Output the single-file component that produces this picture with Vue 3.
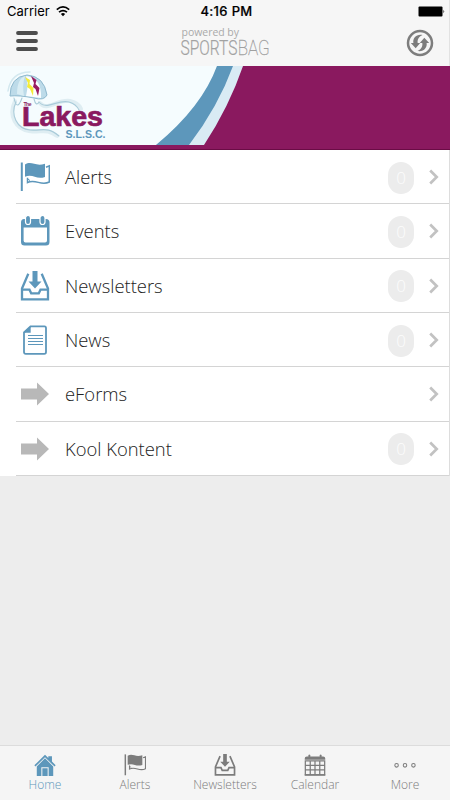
<script setup>
const rows = [
  { label: 'Alerts', icon: 'flag', count: 0 },
  { label: 'Events', icon: 'event', count: 0 },
  { label: 'Newsletters', icon: 'inbox', count: 0 },
  { label: 'News', icon: 'page', count: 0 },
  { label: 'eForms', icon: 'arrow' },
  { label: 'Kool Kontent', icon: 'arrow', count: 0 },
]
const tabs = [
  { label: 'Home', icon: 'home', active: true },
  { label: 'Alerts', icon: 'flag' },
  { label: 'Newsletters', icon: 'inbox' },
  { label: 'Calendar', icon: 'calendar' },
  { label: 'More', icon: 'more' },
]
</script>

<template>
  <svg class="defs" width="0" height="0">
    <symbol id="flag" viewBox="0 0 30 30">
      <path d="M0.8 0.500h2v28.500h-2z" fill="currentColor" />
      <path d="M5 2.400C12-1.500 15 5 25 1.800V15C16 18 13 11.500 5 14.800z" fill="currentColor" />
      <path d="M26 5.200L29.300 3.800V20C21 24.500 16 16.500 7.500 20.500V15.700" fill="none" stroke="currentColor" stroke-width="1.500" />
      <path d="M7 16.300L10 18.600" stroke="currentColor" stroke-width="1" />
    </symbol>
    <symbol id="event" viewBox="0 0 30 30">
      <path fill-rule="evenodd" d="M4 3H26Q29.500 3 29.500 6.500V26Q29.500 29.500 26 29.500H4.500Q1 29.500 1 26V6.500Q1 3 4 3zM3.600 11.500V24.500Q3.600 26.500 5.500 26.500H25Q27 26.500 27 24.500V11.500z" fill="currentColor" />
      <g fill="currentColor" stroke="#fff" stroke-width="1.200"><rect x="5.500" y="-.500" width="5" height="9" rx="2.500" /><rect x="20" y="-.500" width="5" height="9" rx="2.500" /></g>
    </symbol>
    <symbol id="inbox" viewBox="0 0 30 30">
      <path d="M8.300 2.800L2 17.500V28.400H28V17.500L21.700 2.800" fill="none" stroke="currentColor" stroke-width="2.300" />
      <path d="M2 18.700H9.500L11.200 22.300H18.800L20.500 18.700H28" fill="none" stroke="currentColor" stroke-width="2.300" />
      <path d="M12.500 0h5v10.500h4L15 17.500 8.500 10.500h4z" fill="currentColor" />
    </symbol>
    <symbol id="page" viewBox="0 0 30 30">
      <path d="M10.500 1.300H24.500Q26 1.300 26 3V27Q26 28.800 24.300 28.800H5.700Q4 28.800 4 27V7.500z" fill="none" stroke="currentColor" stroke-width="1.800" />
      <path d="M4 7.800L10.700 1V7.800z" fill="currentColor" />
      <path d="M8 10.500H23M8 13.500H23M8 16.500H23M8 19.500H23" stroke="currentColor" stroke-width="1" />
    </symbol>
    <symbol id="arrow" viewBox="0 0 30 30">
      <path d="M1 9.500H17V3.500L29 15 17 26.500V20.500H1z" fill="#b8b8b8" />
    </symbol>
    <symbol id="home" viewBox="0 0 30 30">
      <path d="M.500 15.500L15 1 19.500 5.300V3H24.500V10.200L29.500 15.500 28 17.200 15 4.400 2 17.200z" fill="currentColor" />
      <path fill-rule="evenodd" d="M3.800 17L15 5.800 26.200 17V30H3.800zM10 18V30H11.400V19.400H18.600V30H20V18z" fill="currentColor" />
    </symbol>
    <symbol id="calendar" viewBox="0 0 30 30">
      <path d="M1 6Q1 3.500 4 3.500H6V1.500Q7.300 0 8.600 1.500V3.500H21.400V1.500Q22.700 0 24 1.500V3.500H26Q29 3.500 29 6V8H1z" fill="currentColor" />
      <path d="M1.800 9.500H28.200V28.300H1.800zM1.800 15.500H28.200M1.800 21.500H28.200M8.500 9.500V28M15 9.500V28M21.500 9.500V28" fill="none" stroke="currentColor" stroke-width="1.700" />
      <path d="M1 28.500H29" stroke="currentColor" stroke-width="2" />
    </symbol>
    <symbol id="more" viewBox="0 0 30 30">
      <g fill="none" stroke="currentColor" stroke-width="1.400"><circle cx="3.500" cy="15.500" r="2.400" /><circle cx="15" cy="15.500" r="2.400" /><circle cx="26.500" cy="15.500" r="2.400" /></g>
    </symbol>
  </svg>

  <div class="screen">
    <header class="top">
      <div class="status">
        <div class="carrier">
          <span>Carrier</span>
          <svg width="14" height="11" viewBox="0 0 14 11">
            <path d="M.800 3.600Q7-1.800 13.200 3.600M3 6.200Q7 2.900 11 6.200" fill="none" stroke="#000" stroke-width="1.700" />
            <path d="M4.900 8Q7 6.200 9.100 8L7 10.200z" />
          </svg>
        </div>
        <span class="time">4:16 PM</span>
        <svg class="battery" width="27" height="11" viewBox="0 0 27 11">
          <rect x=".500" y=".500" width="24" height="10" rx="1" /><path d="M25.500 3.700Q27 5.500 25.500 7.300z" />
        </svg>
      </div>
      <div class="nav">
        <svg class="menu" width="22" height="21" viewBox="0 0 22 21"><path d="M2 2H20M2 10H20M2 18H20" stroke="#4d4d4d" stroke-width="3.800" stroke-linecap="round" /></svg>
        <svg class="brand" width="92" height="36" viewBox="0 0 92 36">
          <text x="2.500" y="12.500" class="powered" textLength="57.500">powered by</text>
          <text x="1.500" y="31.500" class="sports" textLength="57" lengthAdjust="spacingAndGlyphs">SPORTS</text>
          <text x="58.800" y="31.500" class="bag" textLength="32" lengthAdjust="spacingAndGlyphs">BAG</text>
        </svg>
        <svg class="refresh" width="28" height="28" viewBox="0 0 28 28">
          <circle cx="14" cy="14" r="12" fill="none" stroke="#7d7d7d" stroke-width="2.500" />
          <g id="half" fill="#7d7d7d"><path d="M16.500 6C10 5 6.600 9.500 7.400 14H4.800L9.700 19.300 14.200 14H11.700C11.200 10.800 12.500 7.700 16.500 6z" /></g>
          <use href="#half" transform="rotate(180 14 14)" />
        </svg>
      </div>
    </header>

    <svg class="banner" width="450" height="84" viewBox="0 66 450 84">
      <rect y="66" width="450" height="84" fill="#f5fcfe" />
      <path d="M217 66Q202 107 156 145H205Q229 107 243 66z" fill="#d9ebf4" />
      <path d="M217 66Q202 107 156 145H189Q218 107 233 66z" fill="#5d97bb" />
      <path d="M243 66H450V150H0V145H204Q229 107 243 66z" fill="#8a195f" />
      <path d="M0 149.500H450" stroke="#6a0c45" />
      <g fill="none" stroke-linecap="round">
        <path d="M15 101C8 116 16 129 29 131S46 128 57 136M40 103C47 112 57 99 70 101Q79 103 81 109" stroke="#deedf2" stroke-width="4" />
        <path d="M16 102C10 115 17 129 30 130S47 126 59 136M14 98Q17 112 22 98M34 99Q36 107 39 102C47 111 57 99 69 102Q76 104 79 110" stroke="#a9cbd9" stroke-width="1.100" />
        <path d="M8 91Q11 72 30 72" stroke="#d3e8ef" stroke-width="1.500" />
      </g>
      <path d="M10 96Q10 77 27 75Q44 76 47 95Q44 101 34 98Q19 95 10 96z" fill="#bddbe9" stroke="#8fb9ce" />
      <path d="M17 94Q17 79 25 76Q22 85 24 96z" fill="#d9edf4" />
      <path d="M26 76Q42 78 41 98L26 96Q29 84 26 76z" fill="#fbfeff" />
      <path d="M25 77L30 80 29.500 84 33.500 88 33 96 30 89 27 87 28 83z" fill="#f4ec38" />
      <path d="M31 76L36.500 80 35.500 84 39.500 88 38 96 35.500 89 33 87 34 83z" fill="#981c62" />
      <text x="23.500" y="106" class="the" textLength="8">The</text>
      <text x="22" y="126" class="lakes" textLength="81" lengthAdjust="spacingAndGlyphs">Lakes</text>
      <text x="65.500" y="137.500" class="slsc" textLength="40" lengthAdjust="spacingAndGlyphs">S.L.S.C.</text>
    </svg>

    <main class="list">
      <div v-for="row in rows" :key="row.label" class="row">
        <svg class="icon"><use :href="'#' + row.icon" /></svg>
        <span class="label">{{ row.label }}</span>
        <span v-if="row.count !== undefined" class="badge">{{ row.count }}</span>
        <svg class="chevron" width="10" height="16" viewBox="0 0 10 16"><path d="M1.200 1.500L7.700 8 1.200 14.500" fill="none" stroke="#c2c2c2" stroke-width="2.700" /></svg>
      </div>
    </main>

    <footer class="tabs">
      <div v-for="tab in tabs" :key="tab.label" class="tab" :class="{ active: tab.active }">
        <svg class="tab-icon"><use :href="'#' + tab.icon" /></svg>
        <span>{{ tab.label }}</span>
      </div>
    </footer>
  </div>
</template>

<style>
body { margin: 0; }
</style>

<style scoped>
.defs { position: absolute; }
.screen { box-sizing: border-box; width: 450px; height: 800px; display: flex; flex-direction: column; background: #ededed; font-family: "Open Sans", sans-serif; overflow: hidden; }
.top { box-sizing: border-box; height: 66px; background: #f6f6f6; flex: none; border-right: 1px solid #e2e2e2; }
.status { height: 23px; display: grid; grid-template-columns: 1fr auto 1fr; align-items: center; padding: 0 4px 0 7px; font: 13px/23px Inter, sans-serif; color: #000; }
.carrier { display: flex; align-items: center; gap: 6px; }
.time { font-weight: 500; letter-spacing: .35px; padding-left: 1px; -webkit-text-stroke: .2px #000; }
.battery { justify-self: end; }
.nav { height: 39px; display: grid; grid-template-columns: 1fr auto 1fr; align-items: center; padding: 0 15px 0 16px; }
.menu { margin-top: -3px; }
.refresh { justify-self: end; }
.brand { display: block; margin-top: -4px; overflow: visible; }
.powered { font-size: 10.500px; fill: #aaa; }
.sports { font: 300 21px Roboto, sans-serif; fill: #a2a2a2; stroke: #a2a2a2; stroke-width: .2px; }
.bag { font: 100 21px Roboto, sans-serif; fill: #a0a0a0; stroke: #a0a0a0; stroke-width: .3px; }
.banner { display: block; flex: none; }
.the { font: bold 5px "Liberation Sans", sans-serif; fill: #8a195f; }
.lakes { font: bold 27px "Liberation Sans", sans-serif; fill: #8a195f; stroke: #8a195f; stroke-width: .7px; }
.slsc { font: bold 11px "Liberation Sans", sans-serif; fill: #5d97bb; }
.list { background: #fff; height: 326px; display: grid; grid-template-rows: repeat(6, 1fr); border-right: 1px solid #ddd; padding-left: 16px; flex: none; }
.row { display: flex; align-items: center; padding: 1px 10px 0 4px; border-bottom: 1px solid #d4d4d4; }
.icon { width: 30px; height: 30px; color: #5d97bb; flex: none; }
.label { margin: -1px 0 0 15px; font-size: 18.400px; font-weight: 300; color: #222; flex: 1; }
.badge { width: 26px; height: 32px; margin: 1px 15px 0 0; border-radius: 13px; background: #ececec; color: #fcfcfc; font-size: 17px; line-height: 32px; text-align: center; font-weight: 300; }
.tabs { height: 54px; margin-top: auto; border-top: 1px solid #dcdcdc; background: #f5f5f5; display: grid; grid-template-columns: repeat(5, 1fr); flex: none; }
.tab { display: flex; flex-direction: column; align-items: center; padding-top: 8px; color: #7c7c7c; font-size: 12px; font-weight: 300; line-height: 18px; }
.tab-icon { width: 22px; height: 22px; }
.active { color: #5d97bb; }
</style>
